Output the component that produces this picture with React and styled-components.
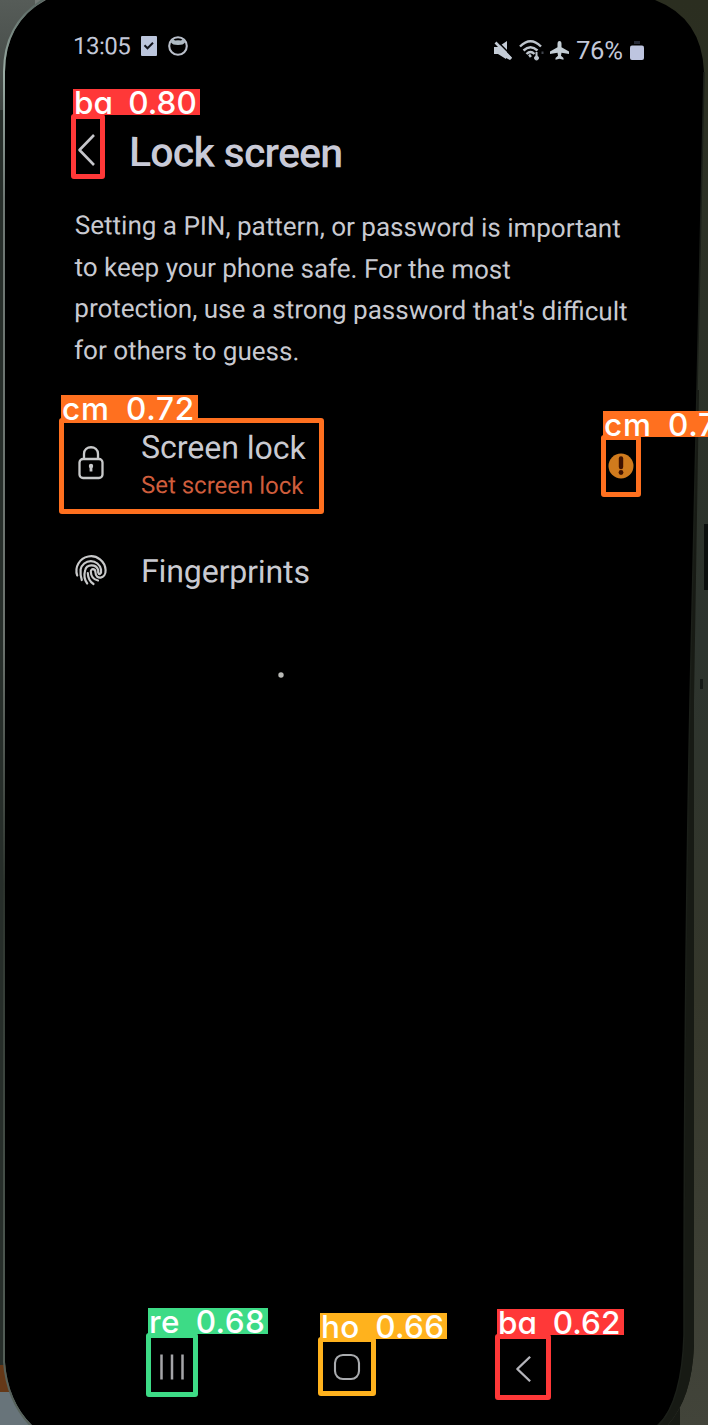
import React from 'react';
import styled, { createGlobalStyle } from 'styled-components';

const GlobalStyle = createGlobalStyle`
  * { box-sizing: border-box; }
  body { margin: 0; background: #30362f; overflow: hidden; }
`;

const Stage = styled.div`
  position: relative;
  width: 708px;
  height: 1425px;
  overflow: hidden;
  font-family: Roboto, 'Liberation Sans', sans-serif;
  color: #c9cad1;
`;

const PhoneBody = styled.svg`
  position: absolute;
  inset: 0;
`;

const Screen = styled.main`
  position: relative;
  display: flex;
  flex-direction: column;
  height: 1425px;
  padding: 30px 60px 0 73px;
`;

const StatusBar = styled.header`
  display: flex;
  justify-content: space-between;
  height: 40px;
  padding-right: 4px;
`;

const StatusGroup = styled.div`
  display: flex;
  align-items: center;
  height: 32px;
  gap: ${(p) => p.$gap}px;
  margin-top: ${(p) => p.$drop || 0}px;
  color: #c3c8d8;
`;

const Text = styled.span`
  display: block;
  width: max-content;
  white-space: nowrap;
  font-size: ${(p) => p.$size}px;
  line-height: ${(p) => p.$line}px;
  font-weight: ${(p) => p.$weight || 400};
  letter-spacing: ${(p) => p.$track || 0}px;
  color: ${(p) => p.$color || 'inherit'};
  transform: rotate(0.35deg);
  transform-origin: left center;
`;

const Icon = styled.svg`
  display: block;
  flex: none;
  overflow: visible;
`;

const TitleBar = styled.div`
  display: flex;
  align-items: center;
  height: 60px;
  margin-top: 50px;
  padding-left: 5px;
  gap: 33px;
`;

const Title = styled(Text).attrs({ as: 'h1' })`
  margin: 3px 0 0 1px;
  color: #c9cad7;
`;

const Description = styled.p`
  margin: 25px 0 0 2px;
  transform: rotate(0.35deg);
  transform-origin: left top;
  ${Text} { transform: none; }
`;

const SettingRow = styled.div`
  display: flex;
  align-items: center;
  height: ${(p) => p.$height}px;
  margin-top: ${(p) => p.$top}px;
`;

const IconSlot = styled.div`
  display: flex;
  justify-content: center;
  width: 36px;
  margin-right: 32px;
`;

const RowText = styled.div`
  flex: 1;
  padding-top: ${(p) => p.$drop}px;
`;

const AlertSlot = styled.div`
  padding: 7px 14px 0 0;
`;

const NavBar = styled.nav`
  display: flex;
  align-items: center;
  height: 40px;
  margin: auto 0 38px 85px;
`;

const NavItem = styled.div`
  display: flex;
  justify-content: center;
  width: 28px;
  padding-top: ${(p) => p.$drop || 0}px;
  margin-right: ${(p) => p.$after || 0}px;
`;

const Detection = styled.div`
  position: absolute;
  left: ${(p) => p.$x}px;
  top: ${(p) => p.$y}px;
  width: ${(p) => p.$w}px;
  height: ${(p) => p.$h}px;
  border: 5px solid ${(p) => p.$color};
  border-radius: 3px;
`;

const DetectionLabel = styled.span`
  position: absolute;
  left: -3px;
  top: ${(p) => p.$top}px;
  width: ${(p) => p.$w}px;
  height: 26px;
  padding-left: 1px;
  background: ${(p) => p.$color};
  color: #fff;
  font: 500 31.5px/27px Inter, 'Liberation Sans', sans-serif;
  font-feature-settings: 'cv11';
  letter-spacing: ${(p) => p.$track}px;
  word-spacing: 7px;
  white-space: nowrap;
`;

const detections = [
  { text: 'ba 0.80', x: 71, y: 114, w: 34, h: 65, labelTop: -30, labelWidth: 127, track: 0, color: '#ff3838' },
  { text: 'cm 0.72', x: 59, y: 418, w: 265, h: 96, labelTop: -28, labelWidth: 137, track: 0.8, color: '#ff701f' },
  { text: 'cm 0.7', x: 601, y: 435, w: 40, h: 62, labelTop: -29, labelWidth: 137, track: 0.8, color: '#ff701f' },
  { text: 're 0.68', x: 146, y: 1333, w: 52, h: 64, labelTop: -30, labelWidth: 120, track: 0.4, color: '#3ddb86' },
  { text: 'ho 0.66', x: 318, y: 1337, w: 58, h: 59, labelTop: -29, labelWidth: 127, track: 0.3, color: '#ffb21d' },
  { text: 'ba 0.62', x: 495, y: 1334, w: 56, h: 66, labelTop: -30, labelWidth: 127, track: 0.1, color: '#ff3838' },
];

function PhoneBackdrop() {
  return (
    <PhoneBody width="708" height="1425" viewBox="0 0 708 1425" aria-hidden="true">
      <defs>
        <linearGradient id="desk" x1="0" y1="0" x2="0" y2="1">
          <stop offset="0" stopColor="#2b2e20" />
          <stop offset="0.45" stopColor="#2d342e" />
          <stop offset="0.7" stopColor="#35372b" />
          <stop offset="1" stopColor="#42443a" />
        </linearGradient>
        <linearGradient id="rim" x1="0" y1="0" x2="0" y2="1">
          <stop offset="0" stopColor="#56645f" />
          <stop offset="0.05" stopColor="#9aaca4" />
          <stop offset="0.14" stopColor="#6e7773" />
          <stop offset="0.45" stopColor="#6b726d" />
          <stop offset="0.62" stopColor="#2c332d" />
          <stop offset="1" stopColor="#59645d" />
        </linearGradient>
        <linearGradient id="corner" x1="0" y1="0" x2="0" y2="1">
          <stop offset="0" stopColor="#565c58" />
          <stop offset="1" stopColor="#3f4542" />
        </linearGradient>
      </defs>
      <rect width="708" height="1425" fill="url(#desk)" />
      <path d="M0 0H60V110H0Z" fill="url(#corner)" />
      <path d="M35 0H60V30H35Z" fill="#737a76" />
      <path d="M0 110H8V1370H0Z" fill="#272e2a" />
      <path d="M0 1365H10V1392H0Z" fill="#653817" />
      <path d="M0 1392H60V1425H0Z" fill="#68747a" />
      <path d="M666 1427Q692 1400 694 1345L694 1000L694 700L699 390H680V1427Z" fill="#171a14" />
      <path d="M640 1427H666Q692 1400 694 1345H640Z" fill="#171a14" />
      <path d="M46 0Q5 22 5 72L5 1362Q8 1402 32 1425H657Q682 1403 684 1335Q684 1000 690 700L697 390L704 72Q702 18 655 0Z" fill="#000" />
      <path d="M46 -2Q4 22 4 72L4 1362Q7 1402 32 1427" fill="none" stroke="url(#rim)" strokeWidth="2" />
      <path d="M657 1427Q682 1403 684 1335Q684 1000 690 700L697 390L704 72" fill="none" stroke="#1b1f19" strokeWidth="1.5" />
      <rect x="704" y="524" width="4" height="66" fill="#0c100e" />
      <rect x="700" y="679" width="3" height="10" fill="#151a17" />
      <ellipse cx="281" cy="675" rx="2.7" ry="2.8" fill="#b9bab6" />
    </PhoneBody>
  );
}

function TaskIcon() {
  return (
    <Icon width="16" height="20" viewBox="0 0 16 20">
      <rect width="16" height="20" rx="1" fill="#bbc5dc" />
      <path d="M3.5 9.3l3 3 5.5-5.5" fill="none" stroke="#10131b" strokeWidth="2" />
    </Icon>
  );
}

function CatIcon() {
  return (
    <Icon width="20" height="20" viewBox="0 0 20 20">
      <circle cx="10" cy="10" r="8.8" fill="none" stroke="#b9bfca" strokeWidth="2.1" />
      <path d="M4 2.5L7 4.6Q10 4 13 4.6L16 2.5L17 6.5Q15.5 9 10 9T3 6.5Z" fill="#aebac3" />
    </Icon>
  );
}

function MuteIcon() {
  return (
    <Icon width="18" height="19" viewBox="0 0 18 19">
      <path d="M0 6H4L13 0V12L18 17L16 19L12 17V18L4 13H0Z" fill="#c3cbd5" />
      <path d="M3 0L15 12" stroke="#000" strokeWidth="1.6" />
      <path d="M1.5 1.5L17 17.5" stroke="#c3cbd5" strokeWidth="2.6" />
    </Icon>
  );
}

function WifiIcon() {
  return (
    <Icon width="24" height="21" viewBox="0 0 24 21" fill="none" stroke="#bec5cd">
      <path d="M1 6.5Q11.5-4 22 6.5M4.5 10.5Q11.5 4 18.5 10.5M7.5 14Q11.5 10 15.5 14" strokeWidth="2.4" />
      <path d="M10 16.5L12 15" strokeWidth="3" />
      <path d="M17.5 12V16" strokeWidth="2" />
      <circle cx="17.5" cy="18" r="2" fill="#bec5cd" />
      <path d="M23.5 11.5V14" stroke="#40444c" strokeWidth="2" />
    </Icon>
  );
}

function PlaneIcon() {
  return (
    <Icon width="19" height="19" viewBox="0 0 19 19">
      <path d="M9.5 0Q11.5 0 11.5 3V6.2L19 10.5V13L11.5 11.8L11 14.8L13.5 17V18.8L9.5 17.8L5.5 18.8V17L8 14.8L7.5 11.8L0 13V10.5L7.5 6.2V3Q7.5 0 9.5 0Z" fill="#c4ced5" />
    </Icon>
  );
}

function BatteryIcon() {
  return (
    <Icon width="14" height="19" viewBox="0 0 14 19">
      <path d="M4 0H10V3H4Z" fill="#252936" />
      <rect y="4.5" width="14" height="14.5" rx="2" fill="#bec5e0" />
    </Icon>
  );
}

function ChevronLeft({ width, height, stroke }) {
  return (
    <Icon width={width} height={height} viewBox="0 0 17 32" preserveAspectRatio="none">
      <path d="M16 1L1.5 16L16 31" fill="none" stroke={stroke} strokeWidth="2.6" strokeLinejoin="round" />
    </Icon>
  );
}

function LockIcon() {
  return (
    <Icon width="26" height="34" viewBox="0 0 26 34" fill="none" stroke="#c8c9ca" strokeWidth="2.3">
      <rect x="1.5" y="13" width="23" height="19" rx="3.5" />
      <path d="M6 13V8C6-1 20-1 20 8V13" />
      <circle cx="13" cy="20" r="2.2" fill="#c8c9ca" stroke="none" />
      <path d="M13 20V25.5" strokeWidth="2.8" />
    </Icon>
  );
}

function FingerprintIcon() {
  return (
    <Icon width="32" height="32" viewBox="0 0 32 32" fill="none" stroke="#c8c9ca" strokeWidth="2.2" strokeLinecap="round">
      <path d="M2.2 21.5A14.6 14.6 0 1 1 30.6 16C31 25.5 20.5 26 20.5 18.5C20.5 14.5 15.8 13.8 15.8 17.8C16 22.5 18.5 25.5 23 26.5" />
      <path d="M6.8 26C5.3 22 5.3 19 5.6 15.5A10.4 10.4 0 0 1 26 15.5V18.5" />
      <path d="M12.2 29.5C9.5 26 8.8 21 10.2 16C11.5 10 21 9.5 23.2 16V18.5Q24.2 22 26 18.5" />
      <path d="M12.8 19C13 24.5 15 27.8 18.5 30" />
    </Icon>
  );
}

function AlertIcon() {
  return (
    <Icon width="26" height="26" viewBox="0 0 26 26">
      <circle cx="13" cy="13" r="12.5" fill="#d07b1d" />
      <path d="M13 5.5V14" stroke="#3f1200" strokeWidth="4.4" strokeLinecap="round" />
      <circle cx="13" cy="19.5" r="2.4" fill="#3f1200" />
    </Icon>
  );
}

function RecentsIcon() {
  return (
    <Icon width="24" height="26" viewBox="0 0 24 26" stroke="#a5a5a8" strokeWidth="2.5">
      <path d="M1.5 0.5V25.5M12 0.5V25.5M22.5 0.5V25.5" />
    </Icon>
  );
}

function HomeIcon() {
  return (
    <Icon width="26" height="26" viewBox="0 0 26 26">
      <rect x="1" y="1" width="24" height="24" rx="8" fill="none" stroke="#a9abae" strokeWidth="2.1" />
    </Icon>
  );
}

export default function App() {
  return (
    <Stage>
      <GlobalStyle />
      <PhoneBackdrop />
      <Screen>
        <StatusBar>
          <StatusGroup $gap={11}>
            <Text $size={24} $line={32} $track={-0.5}>13:05</Text>
            <TaskIcon />
            <CatIcon />
          </StatusGroup>
          <StatusGroup $gap={7} $drop={4}>
            <MuteIcon />
            <WifiIcon />
            <PlaneIcon />
            <Text $size={25.5} $line={33} $track={-0.2}>76%</Text>
            <BatteryIcon />
          </StatusGroup>
        </StatusBar>
        <TitleBar>
          <ChevronLeft width={17} height={32} stroke="#c6c6cb" />
          <Title $size={41} $line={48} $weight={500} $track={-0.75}>Lock screen</Title>
        </TitleBar>
        <Description>
          <Text $size={26} $line={41.7}>Setting a PIN, pattern, or password is important</Text>
          <Text $size={26} $line={41.7}>to keep your phone safe. For the most</Text>
          <Text $size={26} $line={41.7}>protection, use a strong password that's difficult</Text>
          <Text $size={26} $line={41.7}>for others to guess.</Text>
        </Description>
        <SettingRow $height={80} $top={51}>
          <IconSlot><LockIcon /></IconSlot>
          <RowText $drop={4}>
            <Text $size={32} $line={40}>Screen lock</Text>
            <Text $size={24} $line={36} $color="#cf5d3c">Set screen lock</Text>
          </RowText>
          <AlertSlot><AlertIcon /></AlertSlot>
        </SettingRow>
        <SettingRow $height={50} $top={42}>
          <IconSlot><FingerprintIcon /></IconSlot>
          <RowText $drop={3}><Text $size={32} $line={40} $track={-0.1}>Fingerprints</Text></RowText>
        </SettingRow>
        <NavBar>
          <NavItem $after={147}><RecentsIcon /></NavItem>
          <NavItem $after={148}><HomeIcon /></NavItem>
          <NavItem $drop={4}><ChevronLeft width={15} height={26} stroke="#b5b5bb" /></NavItem>
        </NavBar>
      </Screen>
      {detections.map((d) => (
        <Detection key={`${d.x}-${d.y}`} $x={d.x} $y={d.y} $w={d.w} $h={d.h} $color={d.color}>
          <DetectionLabel $top={d.labelTop} $w={d.labelWidth} $track={d.track} $color={d.color}>{d.text}</DetectionLabel>
        </Detection>
      ))}
    </Stage>
  );
}
